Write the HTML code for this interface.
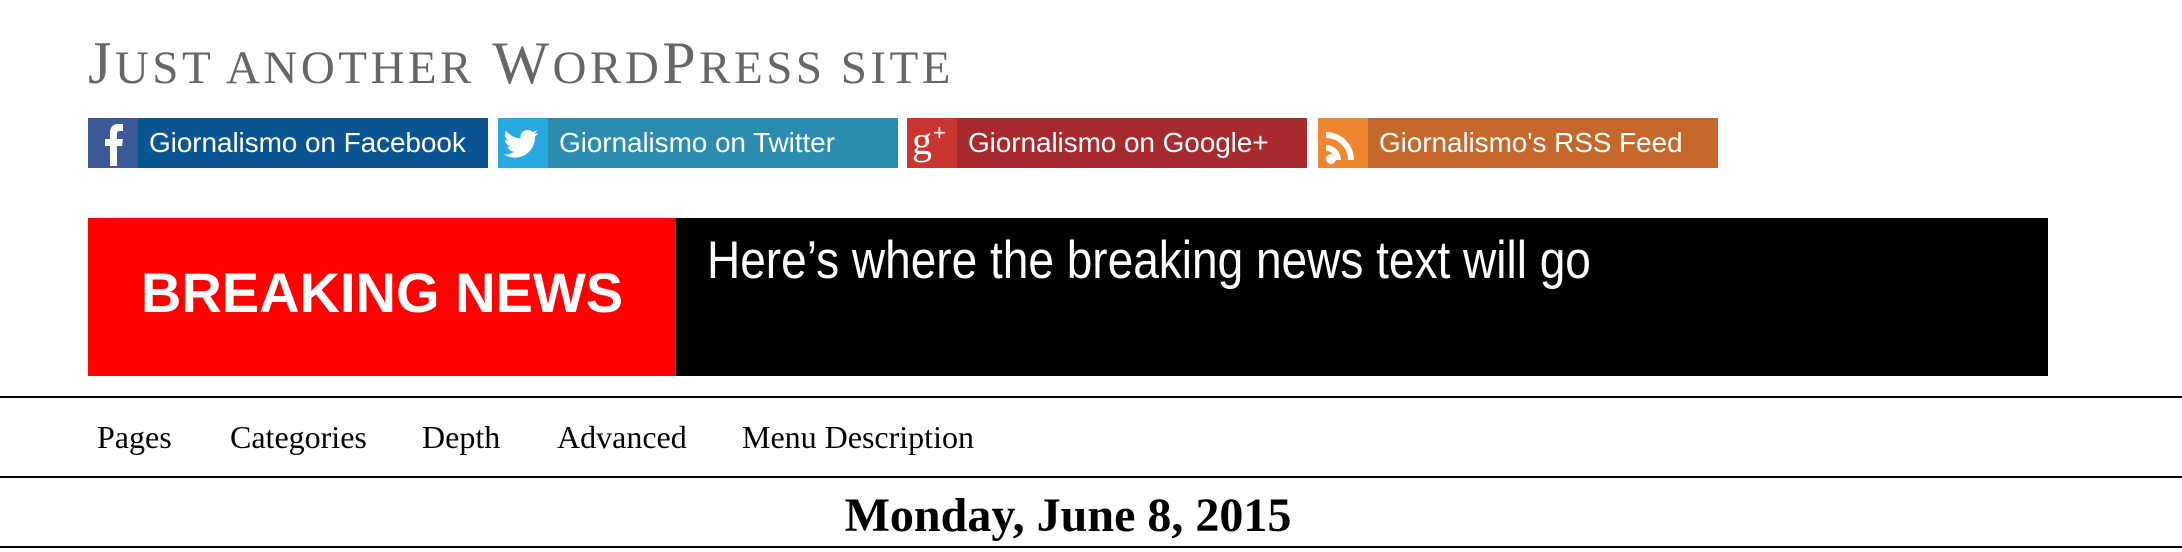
<!DOCTYPE html>
<html><head><meta charset="utf-8"><style>
*{margin:0;padding:0;box-sizing:border-box}
body{width:2182px;height:552px;background:#fff;position:relative;overflow:hidden;font-family:"Liberation Sans",Arial,sans-serif}
.title{position:absolute;left:88px;top:29px;font-family:"Liberation Serif",serif;font-size:60px;color:#666;letter-spacing:3.5px;white-space:nowrap;text-transform:uppercase}
.title small{font-size:47px}
.btn{position:absolute;top:118px;height:50px;width:400px;color:#fff;font-size:28px;line-height:50px;white-space:nowrap}
.btn .ic{position:absolute;left:0;top:0;width:50px;height:50px}
.btn span{position:absolute;left:61px;top:0;letter-spacing:-0.1px}
.br{position:absolute;left:88px;top:218px;width:588px;height:158px;background:#f00;color:#fff;font-weight:bold;font-size:56px;text-align:center;line-height:150px}
.bk{position:absolute;left:676px;top:218px;width:1372px;height:158px;background:#000}
.bk span{position:absolute;left:31px;top:12px;color:#fff;font-size:53px;font-family:"Liberation Sans Narrow","Liberation Sans",sans-serif;transform:scaleX(0.868);transform-origin:left;white-space:nowrap}
.ln{position:absolute;left:0;width:2182px;height:2px;background:#000}
.nav{position:absolute;top:419px;font-family:"Liberation Serif",serif;font-size:32px;color:#000}
.date{position:absolute;left:0;width:2136px;top:488px;text-align:center;font-family:"Liberation Serif",serif;font-weight:bold;font-size:48px}
</style></head><body>
<div class="title">J<small>ust another</small> W<small>ord</small>P<small>ress site</small></div>

<div class="btn" style="left:88px;background:#0a5591"><div class="ic" style="background:#3b5998"><svg width="50" height="50"><path d="M22 48V28h-5v-7h5v-6c0-6 3-9 9-9h4v7h-3c-2 0-3 1-3 3v5h6l-1 7h-5v20z" fill="#fff"/></svg></div><span>Giornalismo on Facebook</span></div>
<div class="btn" style="left:498px;background:#2b8cb0"><div class="ic" style="background:#29a9e1"><svg width="50" height="50"><path d="M40 15c-1 .5-2.5 1-4 1 1.5-1 2.5-2 3-4-1.5 1-3 1.5-4.5 2-1.3-1.4-3-2-5-2-4 0-7 3-7 7 0 .5 0 1 .2 1.5C16.5 20 11.5 17 8 13c-.6 1-1 2.3-1 3.5 0 2.5 1.2 4.5 3 6-1 0-2.2-.4-3-1 0 3.5 2.4 6.3 5.6 7-1 .3-2.3.4-3.2.1 1 3 3.6 5 6.6 5-2.5 2-5.6 3-9 3H6c3 2 7 3 11 3 13 0 20-11 20-20v-1c1.3-1 2.3-2 3-3.2z" fill="#fff"/></svg></div><span>Giornalismo on Twitter</span></div>
<div class="btn" style="left:907px;background:#a62a2e"><div class="ic" style="background:#c9362f"><svg width="50" height="50"><text x="5" y="36" font-family="Liberation Serif,serif" font-size="40" fill="#fff">g</text><text x="26" y="22" font-family="Liberation Sans,sans-serif" font-size="22" fill="#fff">+</text></svg></div><span>Giornalismo on Google+</span></div>
<div class="btn" style="left:1318px;background:#c4692b"><div class="ic" style="background:#ee8530"><svg width="50" height="50"><circle cx="13" cy="41" r="5" fill="#fff"/><path d="M8 27a15 15 0 0 1 15 15h-6a9 9 0 0 0-9-9z M8 14a28 28 0 0 1 28 28h-6A22 22 0 0 0 8 20z" fill="#fff"/></svg></div><span>Giornalismo's RSS Feed</span></div>

<div class="br">BREAKING NEWS</div>
<div class="bk"><span>Here’s where the breaking news text will go</span></div>

<div class="ln" style="top:396px"></div>
<div class="nav" style="left:97px">Pages</div>
<div class="nav" style="left:230px">Categories</div>
<div class="nav" style="left:422px">Depth</div>
<div class="nav" style="left:557px">Advanced</div>
<div class="nav" style="left:742px">Menu Description</div>
<div class="ln" style="top:476px"></div>
<div class="date">Monday, June 8, 2015</div>
<div class="ln" style="top:546px"></div>
</body></html>
